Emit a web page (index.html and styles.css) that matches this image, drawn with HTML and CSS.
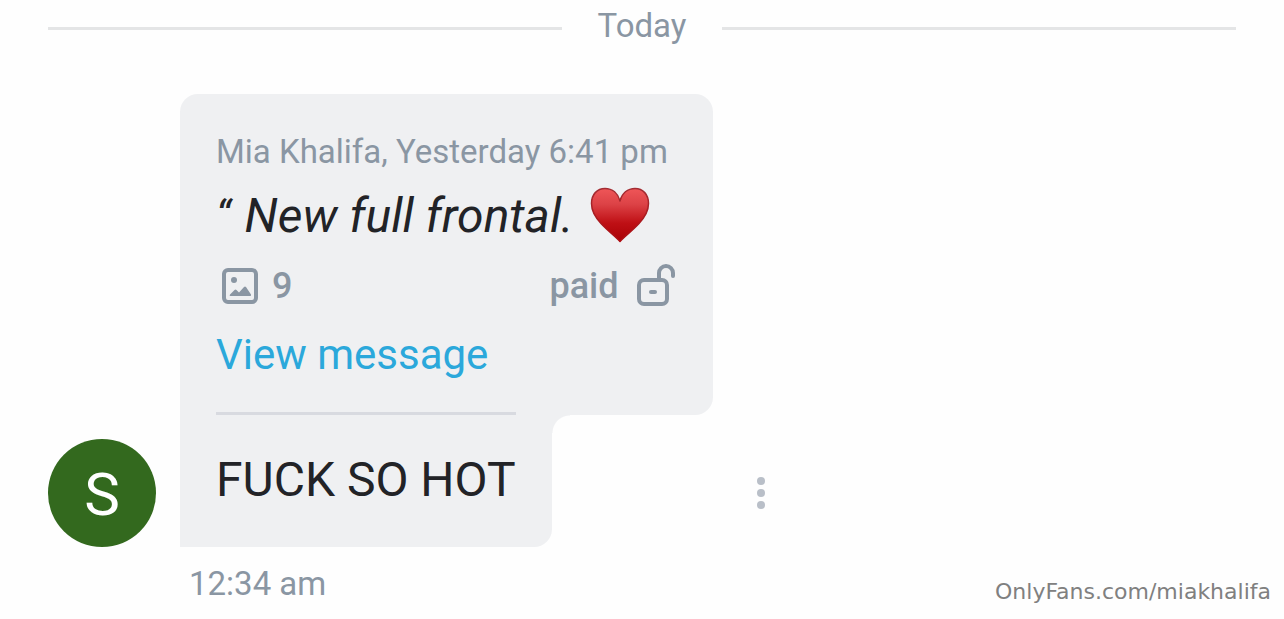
FILE: index.html
```html
<!DOCTYPE html>
<html lang="en">
<head>
<meta charset="utf-8">
<meta name="viewport" content="width=device-width, initial-scale=1">
<title>Messages</title>
<link rel="stylesheet" href="styles.css">
</head>
<body>
<main class="chat">
  <div class="day"><span>Today</span></div>
  <article class="message">
    <div class="avatar">S</div>
    <div class="bubble">
      <section class="quote">
        <div class="meta">Mia Khalifa, Yesterday 6:41 pm</div>
        <div class="quote-text"><span class="mark">“</span><em>New full frontal.</em>
          <svg class="heart" viewBox="0 0 60 56" role="img" aria-label="heart">
            <defs><linearGradient id="red" x1="0" y1="0" x2="0" y2="1"><stop offset="0" stop-color="#ef5658"/><stop offset=".3" stop-color="#dc4246"/><stop offset=".65" stop-color="#bf1015"/><stop offset="1" stop-color="#a90005"/></linearGradient>
            <linearGradient id="edge" x1="0" y1="0" x2="0" y2="1"><stop offset="0" stop-color="#a32d33"/><stop offset="1" stop-color="#ae0b10"/></linearGradient></defs>
            <path d="M30 54.500C25 49 18 44 11 36.500C5 30 1.500 24 1.500 16.500C1.500 7.500 7 1.500 15 1.500C22.500 1.500 28 6.500 30 14C32 6.500 37.500 1.500 45 1.500C53 1.500 58.500 7.500 58.500 16.500C58.500 24 55 30 49 36.500C42 44 35 49 30 54.500Z" fill="url(#red)" stroke="url(#edge)" stroke-width="1.500" stroke-linejoin="round"/>
          </svg>
        </div>
        <div class="media">
          <span class="count">
            <svg class="icon" viewBox="0 0 48 48" aria-hidden="true"><rect x="8" y="8" width="32" height="32" rx="4" fill="none" stroke="currentColor" stroke-width="4"/><circle cx="18" cy="18" r="3" fill="currentColor"/><path d="M14.500 34Q13 34 14 32.500L18.500 28Q19.500 27 20.500 28L23 30.500L28 25Q29 24 30 25L35 32.500Q35.500 34 34 34Z" fill="currentColor"/></svg>9</span>
          <span class="paid">paid
            <svg class="icon" viewBox="0 0 48 48" aria-hidden="true"><rect x="10" y="18" width="28" height="24" rx="5" fill="none" stroke="currentColor" stroke-width="4"/><path d="M30 18V11A7 7 0 0 1 44 11V14" fill="none" stroke="currentColor" stroke-width="4" stroke-linecap="round"/><path d="M22 30H26" fill="none" stroke="currentColor" stroke-width="4" stroke-linecap="round"/></svg></span>
        </div>
        <a class="view" href="#message">View message</a>
      </section>
      <section class="reply"><p class="reply-text">FUCK SO HOT</p></section>
    </div>
    <button class="more" type="button" aria-label="More options">
      <svg viewBox="0 0 8 32" width="8" height="32" aria-hidden="true"><circle cx="4" cy="4" r="4"/><circle cx="4" cy="16" r="4"/><circle cx="4" cy="28" r="4"/></svg>
    </button>
  </article>
  <time class="time">12:34 am</time>
</main>
<div class="watermark">OnlyFans.com/miakhalifa</div>
</body>
</html>
```
FILE: styles.css
```css
* { box-sizing: border-box; }
body {
  margin: 0;
  position: relative;
  min-height: 100vh;
  background: #fefefe;
  color: #222327;
  font-family: Roboto, "Liberation Sans", sans-serif;
}
.chat { padding: 6px 48px 0; }
.day {
  display: flex;
  align-items: center;
  gap: 36px;
  color: #8a96a3;
  font-size: 33px;
  line-height: 40px;
}
.day::before, .day::after {
  content: "";
  flex: 1;
  height: 3px;
  margin-top: 4px;
  background: #e4e5e6;
}
.message {
  display: flex;
  align-items: flex-end;
  margin-top: 48px;
}
.avatar {
  display: grid;
  place-items: center;
  width: 108px;
  height: 108px;
  margin-right: 24px;
  padding-top: 2px;
  border-radius: 50%;
  background: #33691e;
  color: #fff;
  font-size: 60px;
}
.quote {
  padding: 36px 36px 21px;
  border-radius: 18px 18px 18px 0;
  background: #eff0f2;
}
.meta {
  color: #8a96a3;
  font-size: 33px;
  line-height: 44px;
}
.quote-text {
  display: flex;
  align-items: center;
  height: 82px;
  font-size: 48px;
}
.mark { margin-right: 14px; font-size: 42px; font-style: italic; }
.heart { width: 60px; height: 56px; margin: 0 27px 0 16px; }
.media {
  display: flex;
  align-items: center;
  justify-content: space-between;
  color: #8a96a3;
  font-size: 36px;
  font-weight: 500;
  line-height: 60px;
}
.count, .paid { display: flex; align-items: center; }
.count { gap: 8px; }
.paid { gap: 10px; }
.icon { width: 48px; height: 48px; }
.view {
  display: block;
  color: #2ba8db;
  font-size: 42px;
  line-height: 78px;
  text-decoration: none;
}
.reply {
  position: relative;
  width: fit-content;
  margin-top: -3px;
  padding: 0 36px 35px;
  border-radius: 0 0 18px 0;
  background: #eff0f2;
}
.reply::after {
  content: "";
  position: absolute;
  top: 3px;
  left: 100%;
  width: 18px;
  height: 18px;
  background: radial-gradient(circle at 100% 100%, transparent 17px, #eff0f2 18px);
}
.reply-text {
  margin: 0;
  padding-top: 33px;
  border-top: 3px solid #d8dae0;
  font-size: 48px;
  line-height: 64px;
}
.more {
  display: grid;
  place-items: center;
  width: 96px;
  height: 108px;
  padding: 0;
  border: 0;
  background: none;
  fill: #b9bfc8;
}
.time {
  display: block;
  margin: 16px 0 0 141px;
  color: #8a96a3;
  font-size: 33px;
  line-height: 42px;
}
.watermark {
  position: absolute;
  right: 13px;
  bottom: 12px;
  color: #808080;
  font: 22px/30px "DejaVu Sans", sans-serif;
}
```
